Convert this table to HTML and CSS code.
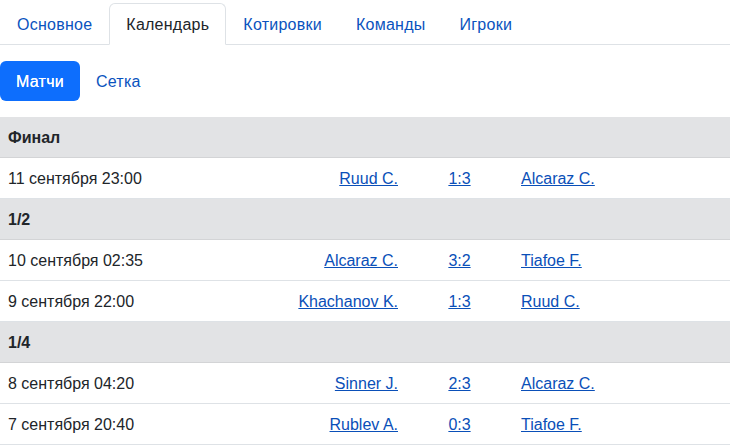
FILE: index.html
```html
<!DOCTYPE html>
<html lang="ru">
<head>
<meta charset="utf-8">
<link rel="stylesheet" href="styles.css">
</head>
<body>
<ul class="tabs">
  <li><a class="tab" href="#">Основное</a></li>
  <li><a class="tab active" href="#">Календарь</a></li>
  <li><a class="tab" href="#">Котировки</a></li>
  <li><a class="tab" href="#">Команды</a></li>
  <li><a class="tab" href="#">Игроки</a></li>
</ul>
<ul class="pills">
  <li><a class="pill active" href="#">Матчи</a></li>
  <li><a class="pill" href="#">Сетка</a></li>
</ul>
<table class="matches">
  <colgroup>
    <col class="c-date"><col class="c-p1"><col class="c-score"><col class="c-p2">
  </colgroup>
  <tbody>
    <tr class="group"><th colspan="4">Финал</th></tr>
    <tr><td>11 сентября 23:00</td><td class="p1"><a href="#">Ruud C.</a></td><td class="score"><a href="#">1:3</a></td><td><a href="#">Alcaraz C.</a></td></tr>
    <tr class="group"><th colspan="4">1/2</th></tr>
    <tr><td>10 сентября 02:35</td><td class="p1"><a href="#">Alcaraz C.</a></td><td class="score"><a href="#">3:2</a></td><td><a href="#">Tiafoe F.</a></td></tr>
    <tr><td>9 сентября 22:00</td><td class="p1"><a href="#">Khachanov K.</a></td><td class="score"><a href="#">1:3</a></td><td><a href="#">Ruud C.</a></td></tr>
    <tr class="group"><th colspan="4">1/4</th></tr>
    <tr><td>8 сентября 04:20</td><td class="p1"><a href="#">Sinner J.</a></td><td class="score"><a href="#">2:3</a></td><td><a href="#">Alcaraz C.</a></td></tr>
    <tr><td>7 сентября 20:40</td><td class="p1"><a href="#">Rublev A.</a></td><td class="score"><a href="#">0:3</a></td><td><a href="#">Tiafoe F.</a></td></tr>
  </tbody>
</table>
</body>
</html>
```

FILE: styles.css
```css
* { box-sizing: border-box; }
html, body { margin: 0; padding: 0; background: #fff; }
body {
  font-family: "Liberation Sans", Arial, sans-serif;
  font-size: 16px;
  line-height: 24px;
  color: #212529;
}
ul { list-style: none; margin: 0; padding: 0; }
a { color: #0a53be; }

.tabs {
  display: flex;
  padding-top: 3px;
  border-bottom: 1px solid #dee2e6;
}
.tab {
  display: block;
  padding: 9px 16px 7px;
  border: 1px solid transparent;
  border-top-left-radius: 6px;
  border-top-right-radius: 6px;
  margin-bottom: -1px;
  text-decoration: none;
  letter-spacing: 0.25px;
  color: #0a53be;
}
.tab.active {
  color: #212529;
  background: #fff;
  border-color: #dee2e6 #dee2e6 #fff;
}

.pills {
  display: flex;
  margin-top: 16px;
}
.pill {
  display: block;
  padding: 9px 16px 7px;
  border-radius: 6px;
  text-decoration: none;
  letter-spacing: 0.25px;
  color: #0a53be;
}
.pill.active {
  background: #0d6efd;
  color: #fff;
  font-weight: 500;
  text-shadow: 0 0 0.4px #fff;
}

.matches {
  margin-top: 16px;
  width: 100%;
  border-collapse: collapse;
  table-layout: fixed;
}
.c-date { width: 220px; }
.c-p1 { width: 186px; }
.c-score { width: 107px; }
.matches th, .matches td {
  padding: 9px 8px 7px;
  border-bottom: 1px solid #dee2e6;
  text-align: left;
  white-space: nowrap;
}
.matches .group th {
  background: #e2e3e5;
  border-bottom-color: #d3d4d6;
  font-weight: bold;
}
.matches .p1 { text-align: right; }
.matches .score { text-align: center; }
.matches a { color: #0a4fb8; }
```
